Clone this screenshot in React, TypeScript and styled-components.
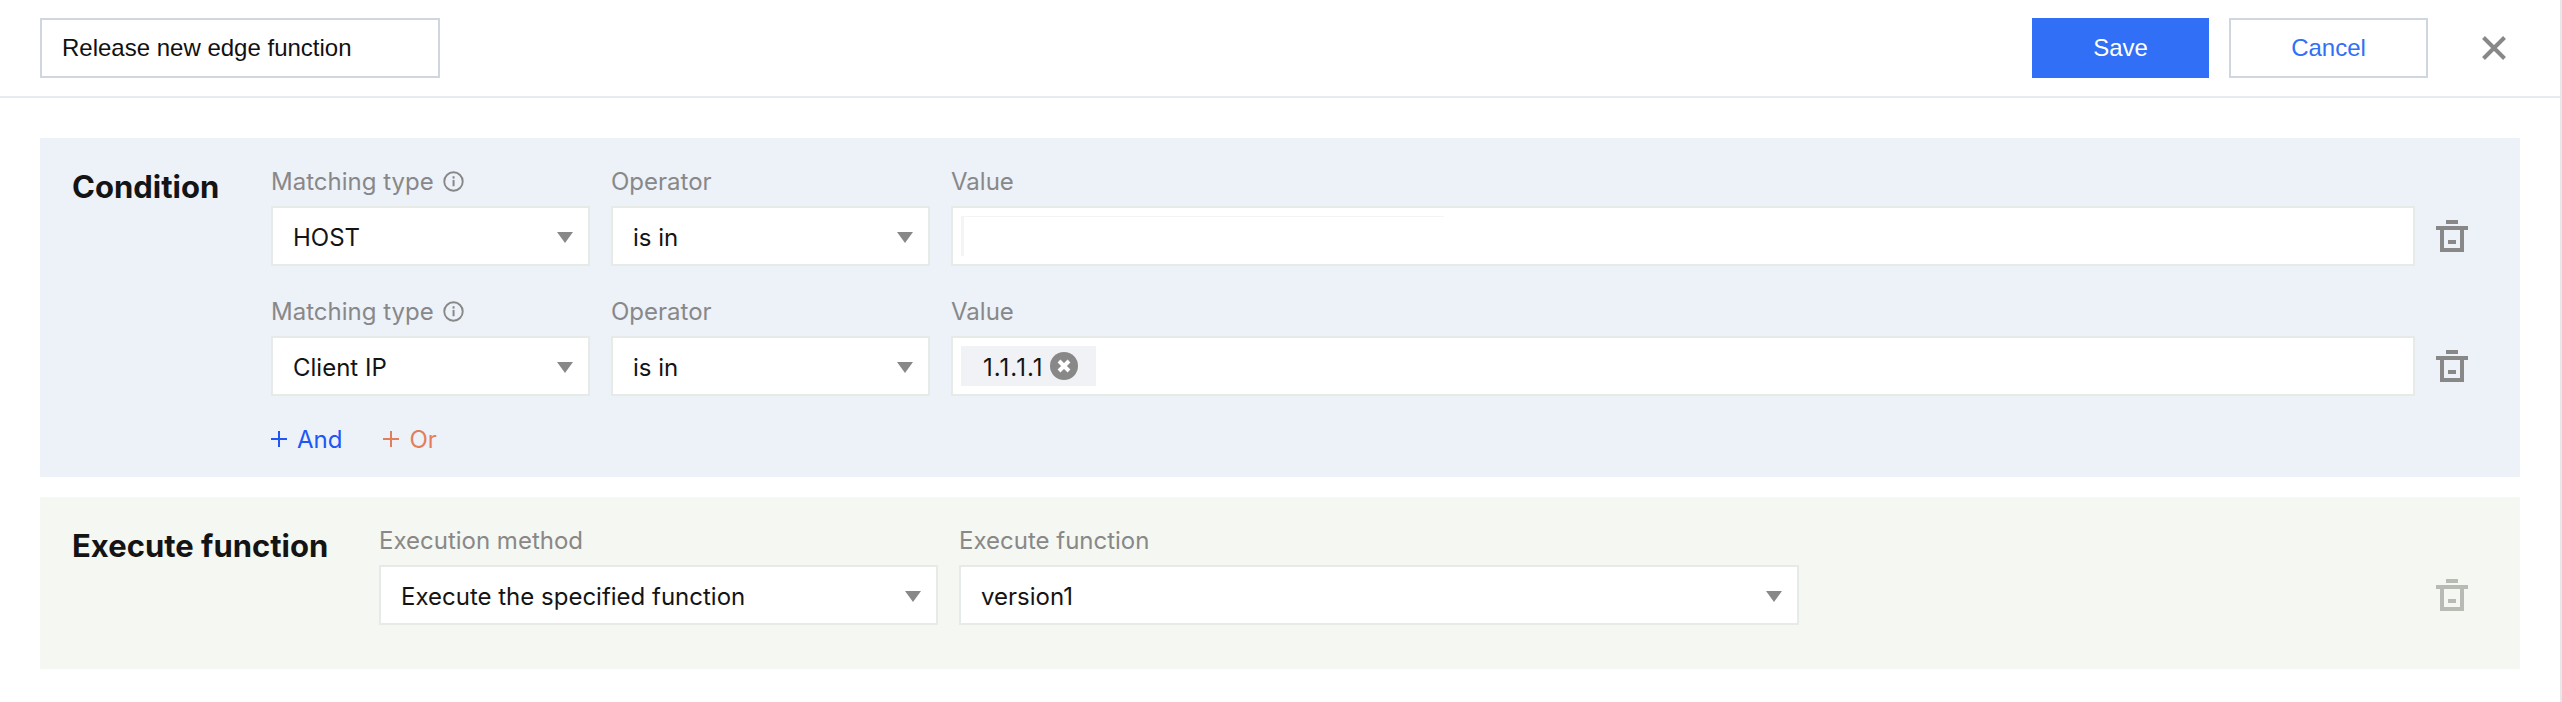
import styled, { createGlobalStyle } from "styled-components";

const GlobalStyle = createGlobalStyle`
  html, body {
    margin: 0;
    padding: 0;
    background: #ffffff;
  }
  body {
    font-family: Inter, "Liberation Sans", sans-serif;
  }
`;

const Page = styled.div`
  box-sizing: border-box;
  width: 2562px;
  height: 702px;
  border-right: 2px solid #e6e8eb;
  overflow: hidden;
`;

const Header = styled.header`
  display: flex;
  align-items: center;
  height: 98px;
  box-sizing: border-box;
  padding: 0 54px 0 40px;
  border-bottom: 2px solid #e7eaef;
`;

const TitleInput = styled.div`
  box-sizing: border-box;
  display: flex;
  align-items: center;
  width: 400px;
  height: 60px;
  padding: 0 20px;
  border: 2px solid #d0d6df;
  font-family: "Liberation Sans", sans-serif;
  font-size: 24px;
  color: #111111;
`;

const Actions = styled.div`
  display: flex;
  align-items: center;
  margin-left: auto;
`;

const Button = styled.button<{ $primary?: boolean }>`
  box-sizing: border-box;
  height: 60px;
  width: ${({ $primary }) => ($primary ? "177px" : "199px")};
  margin-right: ${({ $primary }) => ($primary ? "20px" : "54px")};
  border: ${({ $primary }) => ($primary ? "none" : "2px solid #d0d6df")};
  background: ${({ $primary }) => ($primary ? "#306ff6" : "#ffffff")};
  color: ${({ $primary }) => ($primary ? "#ffffff" : "#306ff6")};
  font-family: "Liberation Sans", sans-serif;
  font-size: 24px;
  padding: 0;
`;

const CloseIcon = () => (
  <svg width="24" height="24" viewBox="0 0 24 24">
    <path d="M1.5 1.5 22.5 22.5M22.5 1.5 1.5 22.5" stroke="#888888" strokeWidth="4" fill="none" />
  </svg>
);

const Body = styled.main`
  display: flex;
  flex-direction: column;
  gap: 20px;
  padding: 40px 40px 0;
`;

const Panel = styled.section<{ $tone: "blue" | "green" }>`
  display: flex;
  box-sizing: border-box;
  width: 2480px;
  padding: 26px 52px ${({ $tone }) => ($tone === "blue" ? "22px" : "44px")} 32px;
  background: ${({ $tone }) => ($tone === "blue" ? "#edf1f8" : "#f5f7f2")};
`;

const PanelTitle = styled.h2<{ $width: number }>`
  flex: none;
  width: ${({ $width }) => $width}px;
  margin: 0;
  padding-top: 5px;
  font-size: 31px;
  line-height: 36px;
  font-weight: 700;
  color: #141414;
`;

const Rows = styled.div`
  flex: 1;
  display: flex;
  flex-direction: column;
  gap: 28px;
`;

const Row = styled.div`
  display: flex;
  gap: 21px;
`;

const Field = styled.div<{ $width?: number }>`
  display: flex;
  flex-direction: column;
  gap: 8px;
  width: ${({ $width }) => ($width ? `${$width}px` : "auto")};
  flex: ${({ $width }) => ($width ? "none" : "1")};
`;

const Label = styled.label`
  display: flex;
  align-items: center;
  gap: 9px;
  height: 34px;
  font-size: 24px;
  color: #888888;
`;

const Box = styled.div`
  box-sizing: border-box;
  display: flex;
  align-items: center;
  height: 60px;
  border: 2px solid #e6ebe8;
  background: #ffffff;
  font-size: 24px;
  color: #141414;
`;

const SelectBox = styled(Box)`
  justify-content: space-between;
  padding: 2px 15px 0 20px;
`;

const Caret = styled.span`
  width: 0;
  height: 0;
  border-left: 8px solid transparent;
  border-right: 8px solid transparent;
  border-top: 11px solid #888888;
`;

const ValueBox = styled(Box)`
  padding: 0 8px;
`;

const EmptyInput = styled.div`
  box-sizing: border-box;
  width: 483px;
  height: 40px;
  border-top: 1px solid #f3f4f6;
  border-left: 3px solid #f3f4f6;
`;

const Tag = styled.span`
  display: flex;
  align-items: center;
  gap: 6px;
  height: 40px;
  padding: 0 18px 0 22px;
  background: #f1f2f6;
  letter-spacing: 1px;
`;

const TagText = styled.span`
  padding-top: 2px;
`;

const TrashSlot = styled.div`
  display: flex;
  align-items: center;
  align-self: flex-end;
  height: 60px;
  margin-left: auto;
`;

const AddRow = styled.div`
  display: flex;
  align-items: center;
  gap: 41px;
  height: 32px;
  margin-top: -1px;
`;

const AddLink = styled.a<{ $color: string }>`
  display: flex;
  align-items: center;
  gap: 10px;
  font-size: 24px;
  color: ${({ $color }) => $color};
`;

const PlusIcon = () => (
  <svg width="16" height="16" viewBox="0 0 16 16">
    <path d="M0 8H16M8 0V16" stroke="currentColor" strokeWidth="2" fill="none" />
  </svg>
);

const InfoIcon = () => (
  <svg width="21" height="21" viewBox="0 0 20 20" fill="none">
    <circle cx="10" cy="10" r="8.8" stroke="#888888" strokeWidth="1.8" />
    <rect x="9.1" y="8.5" width="1.9" height="6" fill="#888888" />
    <rect x="9.1" y="5" width="1.9" height="2.2" fill="#888888" />
  </svg>
);

const TrashIcon = ({ color = "#888888" }: { color?: string }) => (
  <svg width="32" height="32" viewBox="0 0 32 32" fill={color}>
    <rect x="10" y="0" width="12" height="4" />
    <rect x="0" y="6" width="32" height="4" />
    <path fillRule="evenodd" d="M4 10h24v22H4zM8 10v18h16V10z" />
    <rect x="12" y="20" width="8" height="4" />
  </svg>
);

const ClearIcon = () => (
  <svg width="28" height="28" viewBox="0 0 28 28">
    <circle cx="14" cy="14" r="14" fill="#888888" />
    <path d="M9 9 19 19M19 9 9 19" stroke="#ffffff" strokeWidth="4" />
  </svg>
);

const Select = ({ value }: { value: string }) => (
  <SelectBox>
    <span>{value}</span>
    <Caret />
  </SelectBox>
);

type Condition = { type: string; tag?: string };

const conditions: Condition[] = [{ type: "HOST" }, { type: "Client IP", tag: "1.1.1.1" }];

export default function App() {
  return (
    <Page>
      <GlobalStyle />
      <Header>
        <TitleInput>Release new edge function</TitleInput>
        <Actions>
          <Button $primary>Save</Button>
          <Button>Cancel</Button>
          <CloseIcon />
        </Actions>
      </Header>
      <Body>
        <Panel $tone="blue">
          <PanelTitle $width={199}>Condition</PanelTitle>
          <Rows>
            {conditions.map(({ type, tag }) => (
              <Row key={type}>
                <Field $width={319}>
                  <Label>
                    Matching type <InfoIcon />
                  </Label>
                  <Select value={type} />
                </Field>
                <Field $width={319}>
                  <Label>Operator</Label>
                  <Select value="is in" />
                </Field>
                <Field>
                  <Label>Value</Label>
                  <ValueBox>
                    {tag ? (
                      <Tag>
                        <TagText>{tag}</TagText>
                        <ClearIcon />
                      </Tag>
                    ) : (
                      <EmptyInput />
                    )}
                  </ValueBox>
                </Field>
                <TrashSlot>
                  <TrashIcon />
                </TrashSlot>
              </Row>
            ))}
            <AddRow>
              <AddLink $color="#2156f6">
                <PlusIcon />
                And
              </AddLink>
              <AddLink $color="#e37e5c">
                <PlusIcon />
                Or
              </AddLink>
            </AddRow>
          </Rows>
        </Panel>
        <Panel $tone="green">
          <PanelTitle $width={307}>Execute function</PanelTitle>
          <Rows>
            <Row>
              <Field $width={559}>
                <Label>Execution method</Label>
                <Select value="Execute the specified function" />
              </Field>
              <Field $width={840}>
                <Label>Execute function</Label>
                <Select value="version1" />
              </Field>
              <TrashSlot>
                <TrashIcon color="#b8bab4" />
              </TrashSlot>
            </Row>
          </Rows>
        </Panel>
      </Body>
    </Page>
  );
}
